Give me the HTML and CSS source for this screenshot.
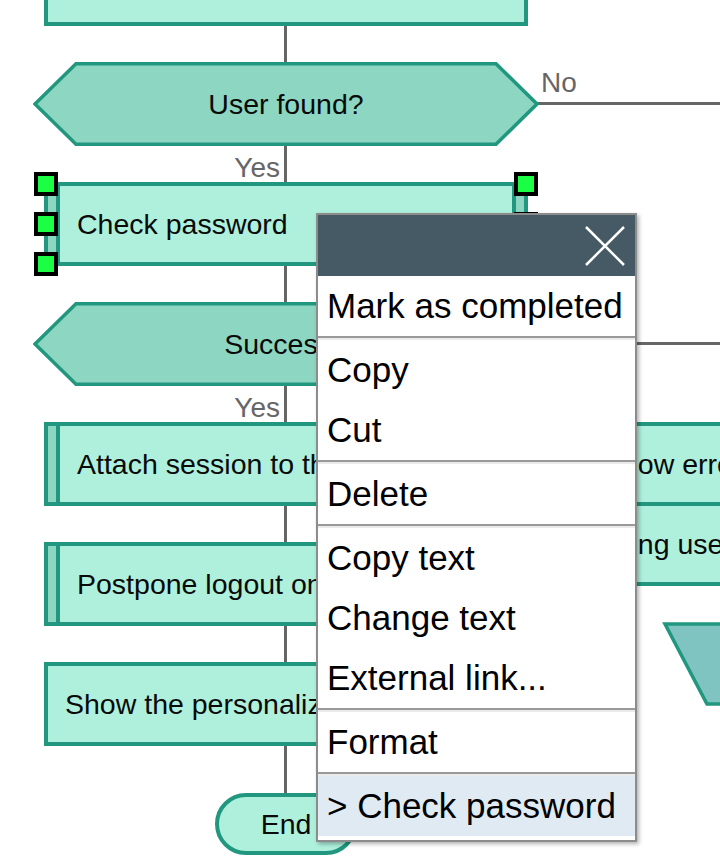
FILE: index.html
```html
<!DOCTYPE html>
<html lang="en">
<head>
    <meta charset="UTF-8">
    <meta name="viewport" content="width=device-width, initial-scale=1.0">
    <title>Login flow</title>
    <link rel="stylesheet" href="styles.css">
</head>
<body>
    <div class="canvas">
        <!-- connectors -->
        <div class="wire wire-main"></div>
        <div class="wire wire-no1"></div>
        <div class="wire wire-no2"></div>

        <!-- main column -->
        <div class="node action n-find"></div>

        <div class="node question n-found">
            <svg class="shape" viewBox="0 0 506 84"><polygon points="43,1.75 463,1.75 504,42 463,82.25 43,82.25 2,42"/></svg>
            <span>User found?</span>
        </div>
        <span class="label label-no">No</span>
        <span class="label label-yes label-yes1">Yes</span>

        <div class="node action insertion n-check">Check password</div>

        <div class="node question n-success">
            <svg class="shape" viewBox="0 0 506 84"><polygon points="43,1.75 463,1.75 504,42 463,82.25 43,82.25 2,42"/></svg>
            <span>Success?</span>
        </div>
        <span class="label label-yes label-yes2">Yes</span>

        <div class="node action insertion n-attach">Attach session to the user</div>
        <div class="node action insertion n-postpone">Postpone logout on timeout</div>
        <div class="node action n-show">Show the personalized page</div>
        <div class="node end-node">End</div>

        <!-- right column -->
        <div class="node action n-error">Show error message</div>
        <div class="node action n-retry">Bring user back to login</div>
        <svg class="n-output" viewBox="0 0 90 90"><polygon points="5,4 90,4 90,84 47,84"/></svg>

        <!-- selection handles -->
        <div class="handle h-l1"></div>
        <div class="handle h-l2"></div>
        <div class="handle h-l3"></div>
        <div class="handle h-r1"></div>
        <div class="handle h-r2"></div>

        <!-- context menu -->
        <div class="menu">
            <div class="menu-head">
                <svg class="menu-close" viewBox="0 0 40 40"><path d="M1 1 L39 39 M39 1 L1 39"/></svg>
            </div>
            <div class="menu-item">Mark as completed</div>
            <div class="menu-sep"></div>
            <div class="menu-item">Copy</div>
            <div class="menu-item">Cut</div>
            <div class="menu-sep"></div>
            <div class="menu-item">Delete</div>
            <div class="menu-sep"></div>
            <div class="menu-item">Copy text</div>
            <div class="menu-item">Change text</div>
            <div class="menu-item">External link...</div>
            <div class="menu-sep"></div>
            <div class="menu-item">Format</div>
            <div class="menu-sep"></div>
            <div class="menu-item menu-item-current">&gt; Check password</div>
        </div>
    </div>
</body>
</html>
```

FILE: styles.css
```css
body {
    margin: 0;
    font-family: 'Liberation Sans', Arial, sans-serif;
    background: #fff;
}

.canvas {
    position: relative;
    width: 720px;
    height: 860px;
    overflow: hidden;
}

/* connectors */
.wire {
    position: absolute;
    background: #666;
}

.wire-main {
    left: 284px;
    top: 20px;
    width: 3px;
    height: 790px;
}

.wire-no1,
.wire-no2 {
    left: 536px;
    width: 200px;
    height: 3px;
}

.wire-no1 { top: 102px; }
.wire-no2 { top: 342px; }

/* nodes */
.node {
    position: absolute;
    box-sizing: border-box;
    height: 84px;
    display: flex;
    align-items: center;
    font-size: 28.5px;
    color: #0a0a0a;
    white-space: nowrap;
    overflow: hidden;
}

.action {
    left: 44px;
    width: 484px;
    background: #aef0dc;
    border: 4px solid #20977e;
    padding-left: 17px;
}

.insertion {
    padding-left: 29px;
}

.insertion::before,
.insertion::after {
    content: "";
    position: absolute;
    top: 0;
    bottom: 0;
    width: 8px;
    background: #8cd6c2;
}

.insertion::before {
    left: 0;
    border-right: 4px solid #20977e;
}

.insertion::after {
    right: 0;
    border-left: 4px solid #20977e;
}

.question {
    left: 33px;
    width: 506px;
    justify-content: center;
    overflow: visible;
}

.question .shape {
    position: absolute;
    left: 0;
    top: 0;
    width: 506px;
    height: 84px;
}

.question polygon {
    fill: #8cd6c2;
    stroke: #20977e;
    stroke-width: 3.5;
}

.question span {
    position: relative;
}

.n-find { top: -58px; }
.n-found { top: 62px; }
.n-check { top: 182px; }
.n-success { top: 302px; }
.n-attach { top: 422px; }
.n-postpone { top: 542px; }
.n-show { top: 662px; }

.end-node {
    left: 215px;
    top: 793px;
    width: 142px;
    height: 62px;
    justify-content: center;
    background: #aef0dc;
    border: 4px solid #20977e;
    border-radius: 31px;
}

.n-error,
.n-retry {
    left: 582px;
    width: 300px;
}

.n-error { top: 422px; }
.n-retry { top: 502px; }

.n-output {
    position: absolute;
    left: 660px;
    top: 620px;
    width: 90px;
    height: 90px;
}

.n-output polygon {
    fill: #7fc4c0;
    stroke: #20977e;
    stroke-width: 3.5;
}

/* branch labels */
.label {
    position: absolute;
    font-size: 28px;
    line-height: 31px;
    color: #666;
}

.label-no {
    left: 541px;
    top: 67px;
}

.label-yes {
    right: 440px;
}

.label-yes1 { top: 152px; }
.label-yes2 { top: 392px; }

/* selection handles */
.handle {
    position: absolute;
    width: 24px;
    height: 24px;
    box-sizing: border-box;
    border: 4px solid #000;
    background: #1aff44;
}

.h-l1, .h-l2, .h-l3 { left: 34px; }
.h-r1, .h-r2 { left: 514px; }
.h-l1, .h-r1 { top: 172px; }
.h-l2, .h-r2 { top: 212px; }
.h-l3 { top: 252px; }

/* context menu */
.menu {
    position: absolute;
    left: 316px;
    top: 213px;
    width: 321px;
    box-sizing: border-box;
    border: 2px solid #8c8c8c;
    background: #fff;
    padding-bottom: 4px;
    box-shadow: 2px 2px 4px rgba(0,0,0,0.3);
}

.menu-head {
    height: 61px;
    background: #455a64;
    display: flex;
    align-items: center;
    justify-content: flex-end;
    padding-right: 10px;
}

.menu-close {
    width: 40px;
    height: 40px;
}

.menu-close path {
    stroke: #fff;
    stroke-width: 2.5;
    fill: none;
}

.menu-item {
    height: 60px;
    line-height: 60px;
    padding-left: 9px;
    font-size: 35px;
    color: #000;
    white-space: nowrap;
}

.menu-item-current {
    background: #dfeaf2;
}

.menu-sep {
    height: 2px;
    background: #999;
    border-bottom: 2px solid #ebebeb;
}
```
